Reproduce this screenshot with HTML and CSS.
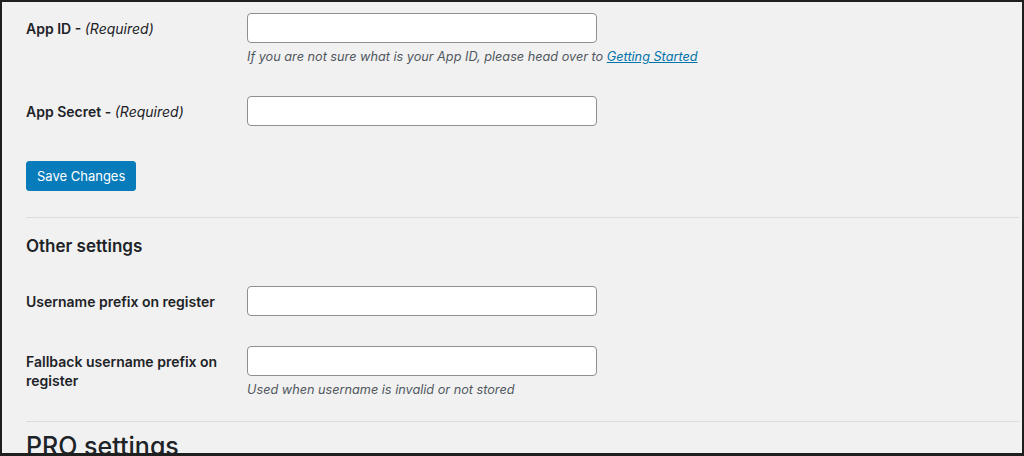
FILE: index.html
```html
<!DOCTYPE html>
<html lang="en">
<head>
<meta charset="utf-8">
<title>Settings</title>
<link rel="stylesheet" href="styles.css">
</head>
<body>
<div class="frame">
  <div class="content">
    <div class="row row-appid">
      <label class="label">App ID - <em>(Required)</em></label>
      <div class="field">
        <input class="text-input" type="text">
        <p class="description">If you are not sure what is your App ID, please head over to <a href="#">Getting Started</a></p>
      </div>
    </div>
    <div class="row row-secret">
      <label class="label">App Secret - <em>(Required)</em></label>
      <div class="field">
        <input class="text-input" type="text">
      </div>
    </div>
    <div class="submit">
      <button class="button-primary" type="button">Save Changes</button>
    </div>
    <hr class="divider">
    <h2 class="section-title">Other settings</h2>
    <div class="row row-prefix">
      <label class="label">Username prefix on register</label>
      <div class="field">
        <input class="text-input" type="text">
      </div>
    </div>
    <div class="row row-fallback">
      <label class="label">Fallback username prefix on register</label>
      <div class="field">
        <input class="text-input" type="text">
        <p class="description">Used when username is invalid or not stored</p>
      </div>
    </div>
    <hr class="divider divider-2">
    <h1 class="pro-title">PRO settings</h1>
  </div>
</div>
</body>
</html>
```

FILE: styles.css
```css
* { box-sizing: border-box; }
html, body { margin: 0; padding: 0; }
body {
  font-family: Inter, "Noto Sans", "Liberation Sans", sans-serif;
  color: #1d2327;
  font-size: 14px;
}
.frame {
  width: 1024px;
  height: 456px;
  overflow: hidden;
  background: #f1f1f1;
  border-style: solid;
  border-color: #1f1f1f;
  border-width: 2px 2px 3px 2px;
}
.content {
  padding: 11px 3px 0 24px;
}
.row {
  display: grid;
  grid-template-columns: 221px 1fr;
  align-items: start;
}
.label {
  font-weight: 600;
  font-size: 14px;
  line-height: 19px;
  padding-top: 6px;
  padding-right: 20px;
}
.label em {
  font-weight: 400;
}
.field {
  display: flex;
  flex-direction: column;
  align-items: flex-start;
}
.text-input {
  width: 350px;
  height: 30px;
  margin: 0;
  background: #fff;
  border: 1px solid #8c8f94;
  border-radius: 4px;
  font: inherit;
}
.description {
  margin: 5px 0 0 0;
  font-size: 12.7px;
  line-height: 18px;
  font-style: italic;
  color: #50575e;
}
.description a {
  color: #0073aa;
  text-decoration: underline;
}
.row-secret { margin-top: 30px; }
.submit { margin-top: 35px; }
.button-primary {
  display: block;
  height: 30px;
  padding: 0 10px;
  background: #087bba;
  border: 1px solid #087bba;
  border-radius: 3px;
  color: #fff;
  font: inherit;
  font-size: 13px;
  line-height: 28px;
  white-space: nowrap;
}
.divider {
  margin: 26px 0 0 0;
  border: 0;
  border-top: 1px solid #dcdcde;
  height: 0;
}
.section-title {
  margin: 17px 0 0 0;
  font-size: 17px;
  line-height: 23px;
  font-weight: 600;
}
.row-prefix { margin-top: 28px; }
.row-fallback { margin-top: 30px; }
.divider-2 { margin-top: 22px; }
.pro-title {
  margin: 8px 0 0 0;
  font-size: 25px;
  line-height: 32px;
  font-weight: 500;
}
```
